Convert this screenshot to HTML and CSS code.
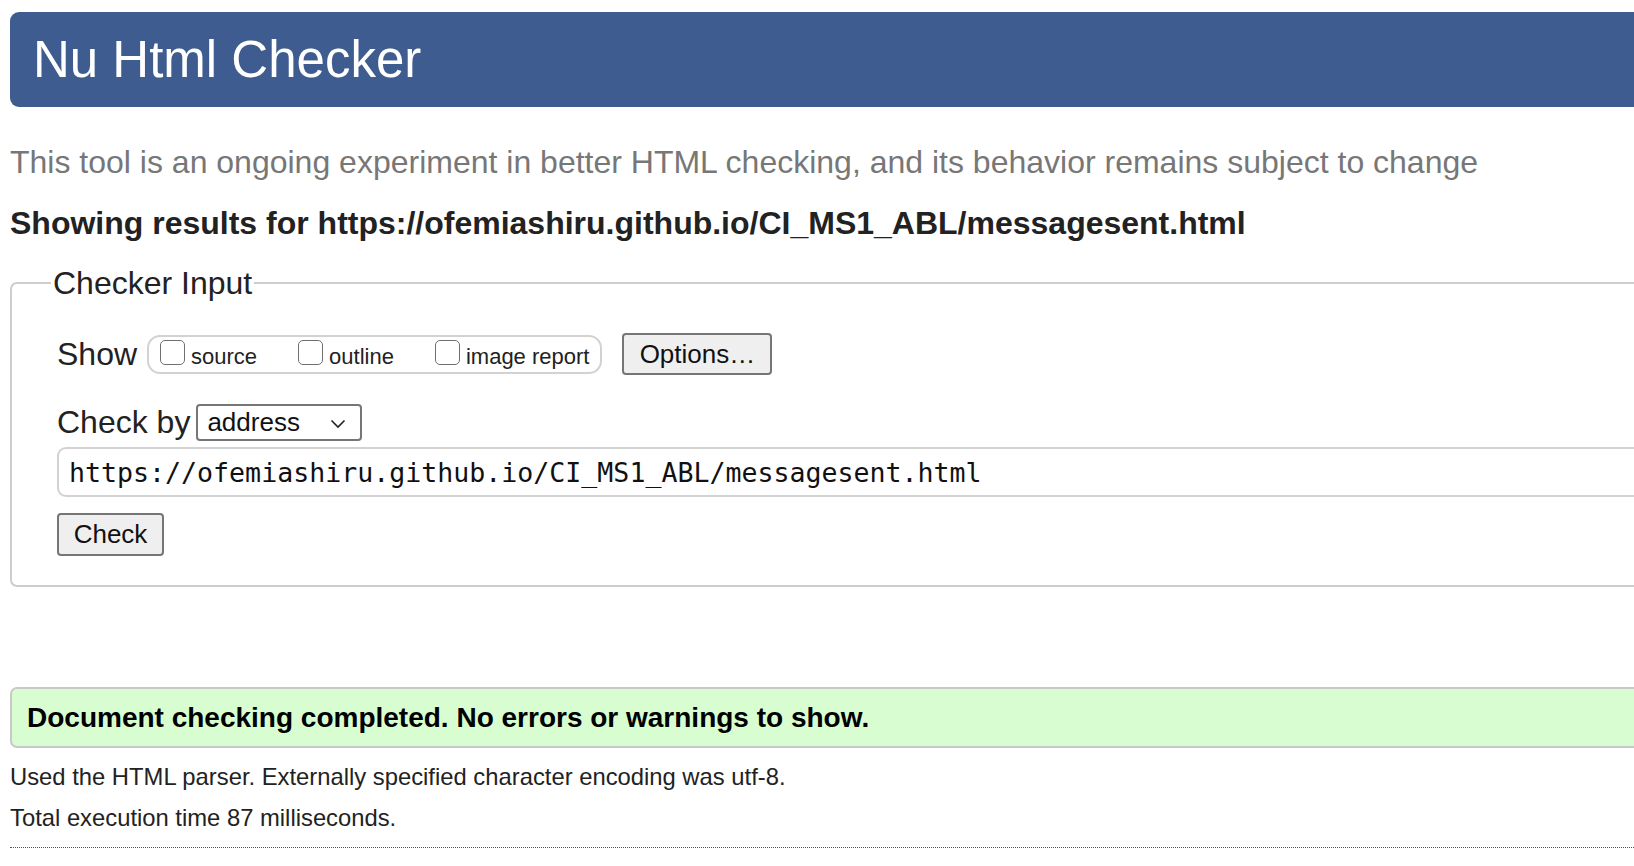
FILE: index.html
```html
<!DOCTYPE html>
<html lang="en">
<head>
<meta charset="utf-8">
<title>Showing results for https://ofemiashiru.github.io/CI_MS1_ABL/messagesent.html - Nu Html Checker</title>
<link rel="stylesheet" href="styles.css">
</head>
<body>
<div class="page">
  <h1 class="banner">Nu Html Checker</h1>
  <p class="subtitle">This tool is an ongoing experiment in better HTML checking, and its behavior remains subject to change</p>
  <h2 class="showing">Showing results for https://ofemiashiru.github.io/CI_MS1_ABL/messagesent.html</h2>
  <fieldset class="checker">
    <legend class="legend">Checker Input</legend>
    <div class="row show-row">
      <span class="label">Show</span>
      <span class="choices">
        <label class="choice"><input type="checkbox" class="box"><span>source</span></label>
        <label class="choice"><input type="checkbox" class="box"><span>outline</span></label>
        <label class="choice"><input type="checkbox" class="box"><span>image report</span></label>
      </span>
      <button type="button" class="btn options">Options…</button>
    </div>
    <div class="row by-row">
      <span class="label">Check by</span>
      <span class="select">address<svg class="chev" width="16" height="10" viewBox="0 0 16 10"><path d="M1.5 1.5 L8 8 L14.5 1.5" fill="none" stroke="#222" stroke-width="1.6"/></svg></span>
    </div>
    <div class="url">https://ofemiashiru.github.io/CI_MS1_ABL/messagesent.html</div>
    <button type="button" class="btn check">Check</button>
  </fieldset>
  <div class="result">Document checking completed. No errors or warnings to show.</div>
  <p class="meta first">Used the HTML parser. Externally specified character encoding was utf-8.</p>
  <p class="meta">Total execution time 87 milliseconds.</p>
  <hr class="dots">
</div>
</body>
</html>
```
FILE: styles.css
```css
html { overflow: hidden; }
body {
  margin: 0;
  background: #fff;
  font-family: "Liberation Sans", Arial, Helvetica, sans-serif;
  color: #222;
}
.page {
  width: 1720px;
  padding: 12px 0 0 10px;
}
.banner {
  margin: 0;
  height: 95px;
  display: flex;
  align-items: center;
  padding-left: 23px;
  background: #3e5c8f;
  color: #fff;
  font-size: 51px;
  font-weight: normal;
  border-radius: 9px;
}
.subtitle {
  margin: 37px 0 0;
  font-size: 32px;
  line-height: 36px;
  color: #777;
}
.showing {
  margin: 25px 0 0;
  font-size: 32px;
  line-height: 36px;
  font-weight: bold;
  color: #222;
}
.checker {
  margin: 24px 0 0;
  padding: 32px 0 29px 45px;
  border: 2px solid #cdcdcd;
  border-radius: 7px;
}
.legend {
  margin-left: -6px;
  padding: 0 2px;
  font-size: 32px;
  line-height: 36px;
  color: #222;
}
.row {
  display: flex;
  align-items: center;
}
.label {
  font-size: 32px;
  color: #222;
}
.show-row { height: 42px; }
.choices {
  display: flex;
  align-items: center;
  gap: 41px;
  margin-left: 10px;
  height: 35px;
  padding: 0 11px;
  border: 2px solid #d2d2d2;
  border-radius: 13px;
}
.choice {
  display: flex;
  align-items: center;
  gap: 6px;
  font-size: 22px;
  color: #222;
}
.choice span { padding-top: 5px; }
.box {
  appearance: none;
  -webkit-appearance: none;
  margin: 0;
  width: 25px;
  height: 25px;
  border: 1.5px solid #6f6f6f;
  border-radius: 5px;
  background: #fff;
  position: relative;
  top: -2px;
}
.btn {
  font-family: "Liberation Sans", Arial, Helvetica, sans-serif;
  font-size: 26px;
  color: #111;
  background: #efefef;
  border: 2px solid #767676;
  border-radius: 4px;
  padding: 0;
  margin: 0;
}
.options {
  margin-left: 20px;
  width: 150px;
  height: 42px;
}
.by-row {
  margin-top: 29px;
}
.select {
  display: flex;
  align-items: center;
  justify-content: space-between;
  margin-left: 6px;
  width: 166px;
  height: 37px;
  box-sizing: border-box;
  padding: 0 14px 0 9px;
  border: 2px solid #767676;
  border-radius: 4px;
  font-size: 26px;
  color: #111;
  background: #fff;
}
.chev { margin-top: 2px; }
.url {
  margin-top: 6px;
  height: 50px;
  box-sizing: border-box;
  display: flex;
  align-items: center;
  padding-left: 10px;
  border: 2px solid #d2d2d2;
  border-right: none;
  border-radius: 9px 0 0 9px;
  font-family: "DejaVu Sans Mono", "Liberation Mono", monospace;
  font-size: 26.6px;
  color: #111;
}
.check {
  display: block;
  margin-top: 16px;
  width: 107px;
  height: 43px;
}
.result {
  margin-top: 100px;
  height: 61px;
  box-sizing: border-box;
  display: flex;
  align-items: center;
  padding-left: 15px;
  background: #d7fdd1;
  border: 2px solid #c9c9c9;
  border-radius: 7px;
  font-size: 28px;
  font-weight: bold;
  color: #000;
}
.meta {
  margin: 0;
  font-size: 23.8px;
  line-height: 41px;
  color: #222;
}
.meta.first { margin-top: 8px; }
.dots {
  margin: 9px 0 0;
  border: none;
  border-top: 1.5px dotted #555;
  height: 0;
}
```
